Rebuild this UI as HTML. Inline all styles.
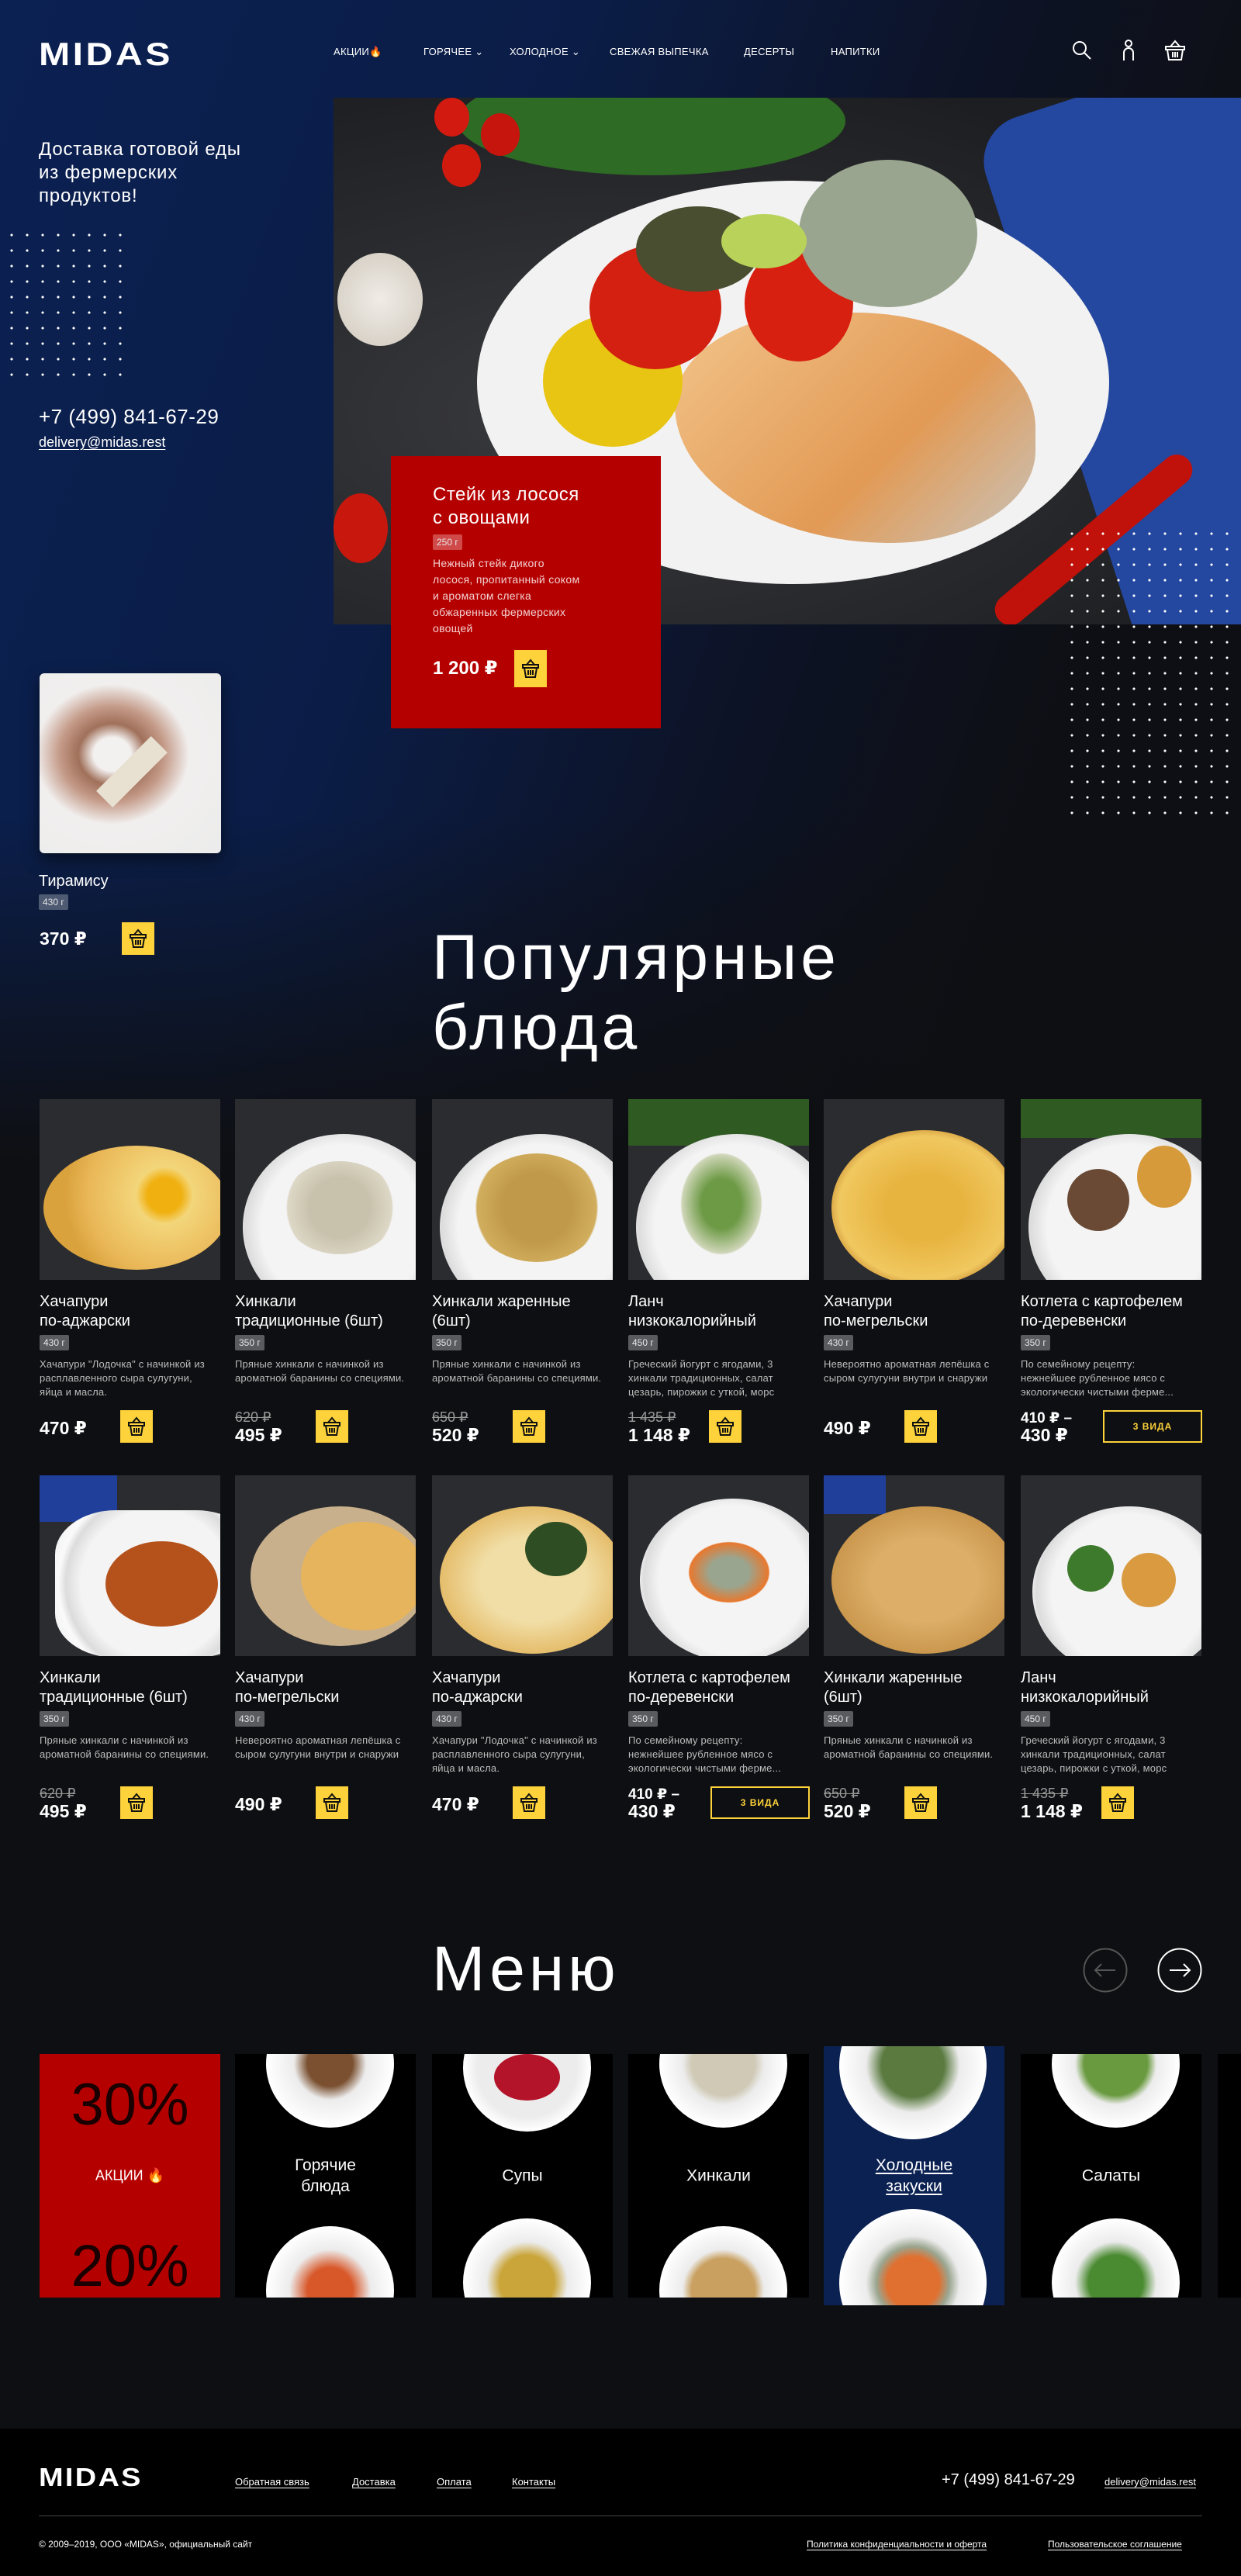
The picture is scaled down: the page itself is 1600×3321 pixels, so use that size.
<!DOCTYPE html>
<html><head><meta charset="utf-8">
<style>
*{margin:0;padding:0;box-sizing:border-box}
body{width:1600px;height:3321px;position:relative;overflow:hidden;background:#0e0f12;font-family:"Liberation Sans","DejaVu Sans",sans-serif;color:#fff}
.a{position:absolute}
.top{left:0;top:0;width:1600px;height:1500px;background:linear-gradient(180deg,rgba(14,15,18,0) 0%,rgba(14,15,18,0) 70%,#0e0f12 100%),linear-gradient(110deg,#0b2152 0%,#0b1d47 35%,#0d1326 60%,#0e0f14 80%)}
.nav{top:59px;font-size:13px;letter-spacing:.3px;color:#fff}
.dots{background-image:radial-gradient(circle,#fff 1.4px,transparent 1.8px);background-size:20px 20px}
.badge{display:inline-block;background:#5a5b5f;color:#e6e6e6;font-size:12px;line-height:20px;height:20px;padding:0 5px;border-radius:2px}
.bask{width:42px;height:42px;background:#fdd23a;display:flex;align-items:center;justify-content:center}
.card{position:absolute;width:233px}
.card .img{width:233px;height:233px;background:#2b2c30;position:relative;overflow:hidden}
.card .t{position:absolute;top:249px;left:0;font-size:20px;line-height:25px;width:240px}
.card .b{position:absolute;top:304px;left:0}
.card .d{position:absolute;top:333px;left:0;font-size:13px;line-height:18px;color:#bdbdbd;width:222px;letter-spacing:.2px}
.card .bk{position:absolute;top:401px;left:104px}
.card .p{position:absolute;top:411px;left:0;font-size:23px;font-weight:bold}
.card .po{position:absolute;top:400px;left:0;font-size:18px;color:#999;text-decoration:line-through}
.card .pn{position:absolute;top:420px;left:0;font-size:23px;font-weight:bold}
.vid{position:absolute;top:401px;left:106px;width:128px;height:42px;border:2px solid #fdd23a;color:#fdd23a;font-size:12px;font-weight:bold;display:flex;align-items:center;justify-content:center;letter-spacing:1px}
.plate{position:absolute;border-radius:50%;background:radial-gradient(circle,#f4f4f4 60%,#dcdcdc 72%,#fafafa 78%,#e8e8e8 100%)}
.food{position:absolute;border-radius:50%}
.tile{position:absolute;top:2648px;width:233px;height:314px;background:#000;overflow:hidden}
.tile .lbl{position:absolute;left:0;right:0;top:50%;transform:translateY(-50%);text-align:center;font-size:21px;line-height:27px}
.tp{position:absolute;left:40px;width:165px;height:165px;border-radius:50%;background:radial-gradient(circle,#ececec 55%,#fff 70%,#dedede 100%)}
.h2{font-size:82px;line-height:90px;font-weight:normal;letter-spacing:5px}
.logo{font-weight:bold;letter-spacing:3px;transform:scaleX(1.15);transform-origin:left}
u{text-underline-offset:3px}
</style></head><body>
<div class="a top"></div>

<!-- header -->
<div class="a logo" style="left:50px;top:46px;font-size:42px">MIDAS</div>
<div class="a nav" style="left:430px">АКЦИИ<span style="color:#f7931e">🔥</span></div>
<div class="a nav" style="left:546px">ГОРЯЧЕЕ ⌄</div>
<div class="a nav" style="left:657px">ХОЛОДНОЕ ⌄</div>
<div class="a nav" style="left:786px">СВЕЖАЯ ВЫПЕЧКА</div>
<div class="a nav" style="left:959px">ДЕСЕРТЫ</div>
<div class="a nav" style="left:1071px">НАПИТКИ</div>
<svg class="a" style="left:1382px;top:52px" width="26" height="26" viewBox="0 0 26 26" fill="none" stroke="#fff" stroke-width="2"><circle cx="10" cy="10" r="8"/><path d="M16 16l8 8"/></svg>
<svg class="a" style="left:1445px;top:50px" width="20" height="30" viewBox="0 0 20 30" fill="none" stroke="#fff" stroke-width="2"><circle cx="10" cy="6" r="4"/><path d="M4 28V18a6 6 0 0 1 12 0v10"/></svg>
<svg class="a" style="left:1500px;top:50px" width="30" height="30" viewBox="0 0 30 30" fill="none" stroke="#fff" stroke-width="2"><path d="M9 10l6-7 6 7M3 10h24v4H3zM5 14l2 13h16l2-13M12 17v7M15 17v7M18 17v7"/></svg>

<!-- left hero text -->
<div class="a" style="left:50px;top:178px;font-size:24px;line-height:30px;letter-spacing:.8px">Доставка готовой еды<br>из фермерских<br>продуктов!</div>
<div class="a dots" style="left:5px;top:293px;width:160px;height:200px"></div>
<div class="a" style="left:50px;top:522px;font-size:26px;letter-spacing:.5px">+7 (499) 841-67-29</div>
<div class="a" style="left:50px;top:560px;font-size:18px"><u>delivery@midas.rest</u></div>

<!-- hero image -->
<div class="a" style="left:430px;top:126px;width:1170px;height:679px;overflow:hidden;background:radial-gradient(ellipse at 30% 60%,#3a3b3f,#1d1e21 80%)">
  <div class="a" style="left:930px;top:-40px;width:420px;height:760px;background:#2447a0;transform:rotate(-18deg);border-radius:60px"></div>
  <div class="a" style="left:185px;top:107px;width:815px;height:520px;border-radius:50%;background:radial-gradient(ellipse,#f2f2f2 70%,#d9d9d9 85%,#fafafa 100%)"></div>
  <div class="a" style="left:160px;top:-40px;width:500px;height:140px;border-radius:50%;background:#2e6b25"></div>
  <div class="food" style="left:130px;top:0;width:45px;height:50px;background:#d21a10"></div>
  <div class="food" style="left:190px;top:20px;width:50px;height:55px;background:#c5150d"></div>
  <div class="food" style="left:140px;top:60px;width:50px;height:55px;background:#d01a0e"></div>
  <div class="food" style="left:5px;top:200px;width:110px;height:120px;background:radial-gradient(circle,#f0ece6,#cfc8bd)"></div>
  <div class="food" style="left:0;top:510px;width:70px;height:90px;background:#c8180e"></div>
  <div class="a" style="left:440px;top:277px;width:465px;height:297px;border-radius:40% 50% 40% 60%;background:linear-gradient(135deg,#f2c48a,#e29a55 60%,#c7c3bb)"></div>
  <div class="food" style="left:270px;top:280px;width:180px;height:170px;background:#e8c512"></div>
  <div class="food" style="left:330px;top:190px;width:170px;height:160px;background:#d32010"></div>
  <div class="food" style="left:530px;top:190px;width:140px;height:150px;background:#d82010"></div>
  <div class="food" style="left:390px;top:140px;width:160px;height:110px;background:#4a4e30"></div>
  <div class="food" style="left:600px;top:80px;width:230px;height:190px;background:#9aa58f"></div>
  <div class="food" style="left:500px;top:150px;width:110px;height:70px;background:#b9d35a"></div>
  <div class="a" style="left:820px;top:550px;width:320px;height:40px;background:#c0120a;transform:rotate(-40deg);border-radius:20px"></div>
</div>
<div class="a dots" style="left:1372px;top:678px;width:228px;height:372px"></div>

<!-- red card -->
<div class="a" style="left:504px;top:588px;width:348px;height:351px;background:#b50000"></div>
<div class="a" style="left:558px;top:623px;font-size:24px;line-height:30px;letter-spacing:.5px">Стейк из лосося<br>с овощами</div>
<div class="a" style="left:558px;top:689px"><span class="badge" style="background:#d04a4a">250 г</span></div>
<div class="a" style="left:558px;top:716px;font-size:14px;line-height:21px;color:#f2d0d0;letter-spacing:.3px">Нежный стейк дикого<br>лосося, пропитанный соком<br>и ароматом слегка<br>обжаренных фермерских<br>овощей</div>
<div class="a" style="left:558px;top:847px;font-size:24px;font-weight:bold">1 200 ₽</div>
<div class="a bask" style="left:663px;top:838px;height:48px"><svg width="24" height="26" viewBox="0 0 24 26" fill="none" stroke="#111" stroke-width="2"><path d="M7 8l5-6 5 6M2 8h20v4H2zM4 12l2 12h12l2-12M9 15v6M12 15v6M15 15v6"/></svg></div>

<!-- tiramisu -->
<div class="a" style="left:51px;top:868px;width:234px;height:232px;border-radius:6px;background:radial-gradient(ellipse at 40% 45%,#f3f1f0 0%,#f3f1f0 12%,#a0705a 22%,#c49a88 34%,#f1efee 50%,#ececec 100%);box-shadow:0 8px 20px rgba(0,0,0,.5)"></div>
<div class="a" style="left:120px;top:980px;width:100px;height:30px;background:#e8e0d0;transform:rotate(-45deg)"></div>
<div class="a" style="left:50px;top:1125px;font-size:20px">Тирамису</div>
<div class="a" style="left:50px;top:1153px"><span class="badge" style="background:#4d5a72">430 г</span></div>
<div class="a" style="left:51px;top:1197px;font-size:23px;font-weight:bold">370 ₽</div>
<div class="a bask" style="left:157px;top:1189px"><svg width="24" height="26" viewBox="0 0 24 26" fill="none" stroke="#111" stroke-width="2"><path d="M7 8l5-6 5 6M2 8h20v4H2zM4 12l2 12h12l2-12M9 15v6M12 15v6M15 15v6"/></svg></div>

<div class="a h2" style="left:557px;top:1190px">Популярные<br>блюда</div>

<!-- row 1 -->
<div class="card" style="left:51px;top:1417px"><div class="img"><div class="food" style="left:5px;top:60px;width:240px;height:160px;background:radial-gradient(circle at 65% 40%,#f0b010 12%,#f3d67a 20%,#e9b656 55%,#d9a23d 70%)"></div></div><div class="t">Хачапури<br>по-аджарски</div><div class="b"><span class="badge">430 г</span></div><div class="d">Хачапури "Лодочка" с начинкой из расплавленного сыра сулугуни, яйца и масла.</div><div class="p">470 ₽</div><div class="bk bask">B</div></div>
<div class="card" style="left:303px;top:1417px"><div class="img"><div class="plate" style="left:10px;top:45px;width:260px;height:240px"></div><div class="food" style="left:60px;top:80px;width:150px;height:120px;background:radial-gradient(circle,#c8c2ad 40%,#ddd7c6 70%,transparent 72%)"></div></div><div class="t">Хинкали<br>традиционные (6шт)</div><div class="b"><span class="badge">350 г</span></div><div class="d">Пряные хинкали с начинкой из ароматной баранины со специями.</div><div class="po">620 ₽</div><div class="pn">495 ₽</div><div class="bk bask">B</div></div>
<div class="card" style="left:557px;top:1417px"><div class="img"><div class="plate" style="left:10px;top:45px;width:260px;height:240px"></div><div class="food" style="left:50px;top:70px;width:170px;height:140px;background:radial-gradient(circle,#c09a4a 40%,#d1ae5e 70%,transparent 72%)"></div></div><div class="t">Хинкали жаренные<br>(6шт)</div><div class="b"><span class="badge">350 г</span></div><div class="d">Пряные хинкали с начинкой из ароматной баранины со специями.</div><div class="po">650 ₽</div><div class="pn">520 ₽</div><div class="bk bask">B</div></div>
<div class="card" style="left:810px;top:1417px"><div class="img"><div class="a" style="left:0;top:0;width:233px;height:60px;background:#2f5a22"></div><div class="plate" style="left:10px;top:45px;width:260px;height:240px"></div><div class="food" style="left:60px;top:60px;width:120px;height:150px;background:radial-gradient(ellipse,#6d9a45 30%,#cfd6b8 60%,transparent 62%)"></div></div><div class="t">Ланч<br>низкокалорийный</div><div class="b"><span class="badge">450 г</span></div><div class="d">Греческий йогурт с ягодами, 3 хинкали традиционных, салат цезарь, пирожки с уткой, морс</div><div class="po">1 435 ₽</div><div class="pn">1 148 ₽</div><div class="bk bask">B</div></div>
<div class="card" style="left:1062px;top:1417px"><div class="img"><div class="food" style="left:10px;top:40px;width:240px;height:200px;background:radial-gradient(ellipse,#e8b440 30%,#f0c860 65%,#d9a545 72%,transparent 74%)"></div></div><div class="t">Хачапури<br>по-мегрельски</div><div class="b"><span class="badge">430 г</span></div><div class="d">Невероятно ароматная лепёшка с сыром сулугуни внутри и снаружи</div><div class="p">490 ₽</div><div class="bk bask">B</div></div>
<div class="card" style="left:1316px;top:1417px"><div class="img"><div class="a" style="left:0;top:0;width:233px;height:50px;background:#2f5a22"></div><div class="plate" style="left:10px;top:45px;width:260px;height:240px"></div><div class="food" style="left:60px;top:90px;width:80px;height:80px;background:#6a4a35"></div><div class="food" style="left:150px;top:60px;width:70px;height:80px;background:#d69a3a"></div></div><div class="t">Котлета с картофелем<br>по-деревенски</div><div class="b"><span class="badge">350 г</span></div><div class="d">По семейному рецепту: нежнейшее рубленное мясо с экологически чистыми ферме...</div><div class="po" style="text-decoration:none;color:#fff;font-weight:bold;font-size:19px">410 ₽ –</div><div class="pn">430 ₽</div><div class="vid">3 ВИДА</div></div>

<!-- row 2 -->
<div class="card" style="left:51px;top:1902px"><div class="img"><div class="a" style="left:0;top:0;width:100px;height:60px;background:#1f3f9a"></div><div class="plate" style="left:20px;top:45px;width:260px;height:190px;border-radius:30%"></div><div class="food" style="left:85px;top:85px;width:145px;height:110px;background:#b5521c"></div></div><div class="t">Хинкали<br>традиционные (6шт)</div><div class="b"><span class="badge">350 г</span></div><div class="d">Пряные хинкали с начинкой из ароматной баранины со специями.</div><div class="po">620 ₽</div><div class="pn">495 ₽</div><div class="bk bask">B</div></div>
<div class="card" style="left:303px;top:1902px"><div class="img"><div class="food" style="left:20px;top:40px;width:230px;height:180px;background:#c9b08c"></div><div class="food" style="left:85px;top:60px;width:160px;height:140px;background:#e6b45c"></div></div><div class="t">Хачапури<br>по-мегрельски</div><div class="b"><span class="badge">430 г</span></div><div class="d">Невероятно ароматная лепёшка с сыром сулугуни внутри и снаружи</div><div class="p">490 ₽</div><div class="bk bask">B</div></div>
<div class="card" style="left:557px;top:1902px"><div class="img"><div class="food" style="left:10px;top:40px;width:240px;height:190px;background:radial-gradient(ellipse,#f1dea6 40%,#e3b863 75%,transparent 77%)"></div><div class="food" style="left:120px;top:60px;width:80px;height:70px;background:#2e4d22"></div></div><div class="t">Хачапури<br>по-аджарски</div><div class="b"><span class="badge">430 г</span></div><div class="d">Хачапури "Лодочка" с начинкой из расплавленного сыра сулугуни, яйца и масла.</div><div class="p">470 ₽</div><div class="bk bask">B</div></div>
<div class="card" style="left:810px;top:1902px"><div class="img"><div class="plate" style="left:15px;top:30px;width:240px;height:210px"></div><div class="food" style="left:70px;top:80px;width:120px;height:90px;background:radial-gradient(ellipse,#9aa58f 30%,#e8782e 60%,transparent 62%)"></div></div><div class="t">Котлета с картофелем<br>по-деревенски</div><div class="b"><span class="badge">350 г</span></div><div class="d">По семейному рецепту: нежнейшее рубленное мясо с экологически чистыми ферме...</div><div class="po" style="text-decoration:none;color:#fff;font-weight:bold;font-size:19px">410 ₽ –</div><div class="pn">430 ₽</div><div class="vid">3 ВИДА</div></div>
<div class="card" style="left:1062px;top:1902px"><div class="img"><div class="a" style="left:0;top:0;width:80px;height:50px;background:#1f3f9a"></div><div class="food" style="left:10px;top:40px;width:240px;height:190px;background:radial-gradient(ellipse,#dcae68 40%,#c8944a 75%,transparent 77%)"></div></div><div class="t">Хинкали жаренные<br>(6шт)</div><div class="b"><span class="badge">350 г</span></div><div class="d">Пряные хинкали с начинкой из ароматной баранины со специями.</div><div class="po">650 ₽</div><div class="pn">520 ₽</div><div class="bk bask">B</div></div>
<div class="card" style="left:1316px;top:1902px"><div class="img"><div class="plate" style="left:15px;top:40px;width:250px;height:220px"></div><div class="food" style="left:60px;top:90px;width:60px;height:60px;background:#3e7a2c"></div><div class="food" style="left:130px;top:100px;width:70px;height:70px;background:#d99a40"></div></div><div class="t">Ланч<br>низкокалорийный</div><div class="b"><span class="badge">450 г</span></div><div class="d">Греческий йогурт с ягодами, 3 хинкали традиционных, салат цезарь, пирожки с уткой, морс</div><div class="po">1 435 ₽</div><div class="pn">1 148 ₽</div><div class="bk bask">B</div></div>

<!-- menu -->
<div class="a h2" style="left:557px;top:2494px">Меню</div>
<svg class="a" style="left:1396px;top:2511px" width="58" height="58" viewBox="0 0 58 58" fill="none" stroke="#555" stroke-width="2"><circle cx="29" cy="29" r="27.5"/><path d="M42 29H16M24 21l-8 8 8 8"/></svg>
<svg class="a" style="left:1492px;top:2511px" width="58" height="58" viewBox="0 0 58 58" fill="none" stroke="#fff" stroke-width="2"><circle cx="29" cy="29" r="27.5"/><path d="M16 29h26M34 21l8 8-8 8"/></svg>

<div class="tile" style="left:51px;background:#b50000"><div class="a" style="left:0;right:0;top:22px;text-align:center;font-size:76px;color:#1a0000">30%</div><div class="lbl" style="font-size:18px">АКЦИИ <span style="color:#f7931e">🔥</span></div><div class="a" style="left:0;right:0;top:230px;text-align:center;font-size:76px;color:#1a0000">20%</div></div>
<div class="tile" style="left:303px"><div class="tp" style="top:-70px;background:radial-gradient(circle,#7a5030 25%,#ececec 40%,#fff 70%,#dedede 100%)"></div><div class="lbl">Горячие<br>блюда</div><div class="tp" style="top:222px;background:radial-gradient(circle,#d8582a 25%,#ececec 45%,#fff 70%,#dedede 100%)"></div></div>
<div class="tile" style="left:557px"><div class="tp" style="top:-65px"></div><div class="food" style="left:80px;top:0;width:85px;height:60px;background:#b3142a"></div><div class="lbl">Супы</div><div class="tp" style="top:212px;background:radial-gradient(circle,#c9a53a 30%,#ececec 45%,#fff 70%,#dedede 100%)"></div></div>
<div class="tile" style="left:810px"><div class="tp" style="top:-70px;background:radial-gradient(circle,#cfc9b6 35%,#ececec 45%,#fff 70%,#dedede 100%)"></div><div class="lbl">Хинкали</div><div class="tp" style="top:222px;background:radial-gradient(circle,#c9a060 35%,#ececec 45%,#fff 70%,#dedede 100%)"></div></div>
<div class="tile" style="left:1062px;top:2638px;height:334px;background:#0b2152"><div class="tp" style="left:20px;width:190px;height:190px;top:-70px;background:radial-gradient(circle,#5a7a40 30%,#ececec 45%,#fff 70%,#dedede 100%)"></div><div class="lbl"><u>Холодные<br>закуски</u></div><div class="tp" style="left:20px;width:190px;height:190px;top:210px;background:radial-gradient(circle,#e07030 25%,#9aa58f 35%,#ececec 45%,#fff 70%,#dedede 100%)"></div></div>
<div class="tile" style="left:1316px"><div class="tp" style="top:-70px;background:radial-gradient(circle,#6a9a40 35%,#ececec 45%,#fff 70%,#dedede 100%)"></div><div class="lbl">Салаты</div><div class="tp" style="top:212px;background:radial-gradient(circle,#4a8a30 30%,#ececec 45%,#fff 70%,#dedede 100%)"></div></div>
<div class="tile" style="left:1570px;width:30px"></div>

<!-- footer -->
<div class="a" style="left:0;top:3131px;width:1600px;height:190px;background:#000"></div>
<div class="a logo" style="left:50px;top:3175px;font-size:33px;letter-spacing:2px">MIDAS</div>
<div class="a" style="left:303px;top:3192px;font-size:13px"><u>Обратная связь</u></div>
<div class="a" style="left:454px;top:3192px;font-size:13px"><u>Доставка</u></div>
<div class="a" style="left:563px;top:3192px;font-size:13px"><u>Оплата</u></div>
<div class="a" style="left:660px;top:3192px;font-size:13px"><u>Контакты</u></div>
<div class="a" style="left:1214px;top:3186px;font-size:20px">+7 (499) 841-67-29</div>
<div class="a" style="left:1424px;top:3192px;font-size:13px"><u>delivery@midas.rest</u></div>
<div class="a" style="left:50px;top:3243px;width:1500px;height:1px;background:#444"></div>
<div class="a" style="left:50px;top:3273px;font-size:12px">© 2009–2019, ООО «MIDAS», официальный сайт</div>
<div class="a" style="left:1040px;top:3273px;font-size:12px"><u>Политика конфиденциальности и оферта</u></div>
<div class="a" style="left:1351px;top:3273px;font-size:12px"><u>Пользовательское соглашение</u></div>

<script>
document.querySelectorAll('.card .bask').forEach(function(b){b.innerHTML='<svg width="24" height="26" viewBox="0 0 24 26" fill="none" stroke="#111" stroke-width="2"><path d="M7 8l5-6 5 6M2 8h20v4H2zM4 12l2 12h12l2-12M9 15v6M12 15v6M15 15v6"/></svg>';});
</script>
</body></html>
